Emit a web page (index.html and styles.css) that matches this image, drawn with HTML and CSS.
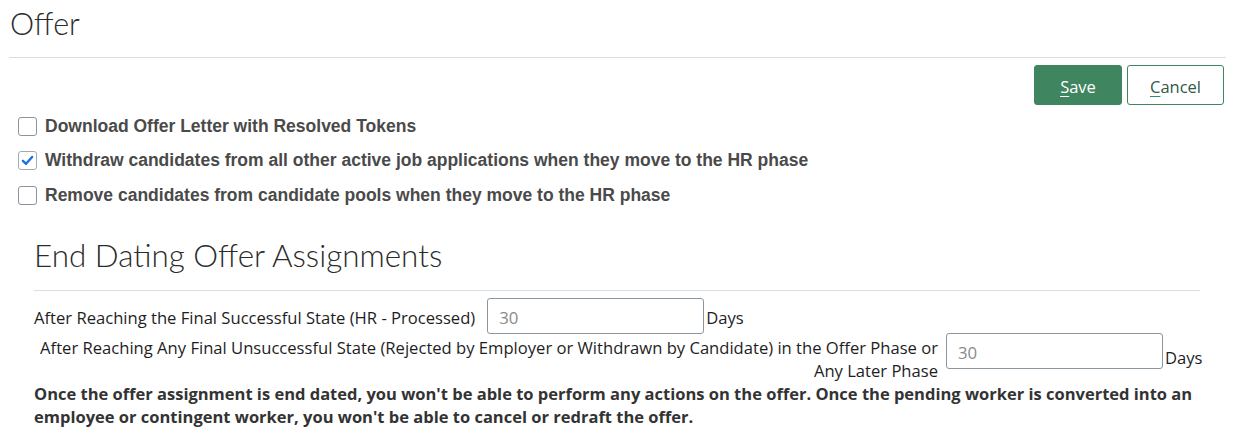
FILE: index.html
```html
<!DOCTYPE html>
<html>
<head>
<meta charset="utf-8">
<link rel="stylesheet" href="styles.css">
</head>
<body>
<div class="page">
  <header class="page-header">
    <h1 class="page-title">Offer</h1>
  </header>
  <div class="toolbar">
    <button class="btn btn-primary"><span class="ak">S</span>ave</button>
    <button class="btn btn-secondary"><span class="ak">C</span>ancel</button>
  </div>
  <div class="options">
    <label class="option">
      <span class="box"></span>
      <span class="option-text">Download Offer Letter with Resolved Tokens</span>
    </label>
    <label class="option">
      <span class="box checked"><svg viewBox="0 0 20 20" width="19" height="19"><path d="M4.6 10.4 L8.3 13.9 L15.4 5.9" fill="none" stroke="#1a73d9" stroke-width="2.8" stroke-linecap="round" stroke-linejoin="round"/></svg></span>
      <span class="option-text">Withdraw candidates from all other active job applications when they move to the HR phase</span>
    </label>
    <label class="option">
      <span class="box"></span>
      <span class="option-text">Remove candidates from candidate pools when they move to the HR phase</span>
    </label>
  </div>
  <section class="section">
    <h2 class="section-title">End Dating Offer Assignments</h2>
    <div class="field-row first">
      <span class="field-label">After Reaching the Final Successful State (HR - Processed)</span>
      <span class="input">30</span>
      <span class="unit">Days</span>
    </div>
    <div class="field-row second">
      <span class="field-label wrap">After Reaching Any Final Unsuccessful State (Rejected by Employer or Withdrawn by Candidate) in the Offer Phase or Any Later Phase</span>
      <span class="input">30</span>
      <span class="unit low">Days</span>
    </div>
    <p class="note">Once the offer assignment is end dated, you won't be able to perform any actions on the offer. Once the pending worker is converted into an employee or contingent worker, you won't be able to cancel or redraft the offer.</p>
  </section>
</div>
</body>
</html>
```

FILE: styles.css
```css
html, body {
  margin: 0;
  padding: 0;
  background: #ffffff;
}

.page {
  padding: 0 12px 0 9px;
  font-family: "Open Sans", "Lato", sans-serif;
  color: #222;
}

.page-header {
  border-bottom: 1px solid #d6dfe6;
  height: 57px;
}

.page-title {
  margin: 0;
  padding: 3px 0 0 1px;
  font-family: "Lato", sans-serif;
  font-weight: 300;
  font-size: 30.5px;
  line-height: 40px;
  color: #2b2b2b;
}

.toolbar {
  display: flex;
  justify-content: flex-end;
  gap: 5px;
  padding: 7px 2px 0 0;
  height: 39px;
}

.btn {
  height: 40px;
  border-radius: 3px;
  font-family: "Open Sans", sans-serif;
  font-size: 16.5px;
  cursor: pointer;
  padding: 3px 0 0;
}

.ak {
  text-decoration: underline;
  text-underline-offset: 3px;
  text-decoration-thickness: 1px;
}

.btn-primary {
  width: 88px;
  background: #3f8560;
  border: 1px solid #3f8560;
  color: #ffffff;
}

.btn-secondary {
  width: 97px;
  background: #ffffff;
  border: 1px solid #3f8560;
  color: #2f5a48;
}

.btn-secondary .ak {
  text-decoration-color: #2e8a7a;
}

.options {
  padding: 12px 0 0 9px;
  display: flex;
  flex-direction: column;
  gap: 14.5px;
}

.option {
  display: flex;
  align-items: center;
  gap: 8px;
  height: 20px;
}

.box {
  width: 17px;
  height: 17px;
  border: 1px solid #8c949b;
  border-radius: 3px;
  background: #fff;
  display: flex;
  align-items: center;
  justify-content: center;
  flex: none;
}

.box.checked {
  border-color: #a3abb2;
}

.box svg {
  display: block;
}

.option-text {
  font-family: "Liberation Sans", Arial, sans-serif;
  font-weight: 700;
  font-size: 17.5px;
  color: #4a4a4a;
}

.section {
  margin: 27px 26px 0 25px;
}

.section-title {
  margin: 0;
  padding-bottom: 12px;
  border-bottom: 1px solid #d6dfe6;
  font-family: "Lato", sans-serif;
  font-weight: 300;
  font-size: 31.4px;
  line-height: 46px;
  color: #2b2b2b;
}

.field-row {
  display: flex;
  font-size: 16.6px;
  color: #1e1e1e;
}

.field-row.first {
  margin-top: 7px;
  align-items: baseline;
}

.field-row.second {
  align-items: flex-start;
  margin-top: -1px;
}

.field-label {
  line-height: 23px;
}

.field-row.first .field-label {
  margin-right: 12px;
}

.field-label.wrap {
  width: 904px;
  padding-top: 3px;
  text-align: right;
  margin-right: 8px;
  flex: none;
}

.input {
  width: 204px;
  height: 31px;
  padding: 3px 0 0 11px;
  border: 1px solid #8c969e;
  border-radius: 3px;
  display: flex;
  align-items: center;
  color: #8a8a8a;
  font-size: 16.8px;
  flex: none;
}

.unit {
  margin-left: 2px;
  line-height: 23px;
}

.unit.low {
  margin-top: 13px;
}

.note {
  margin: 0;
  font-weight: 700;
  font-size: 16.5px;
  line-height: 23px;
  color: #333;
}
```
